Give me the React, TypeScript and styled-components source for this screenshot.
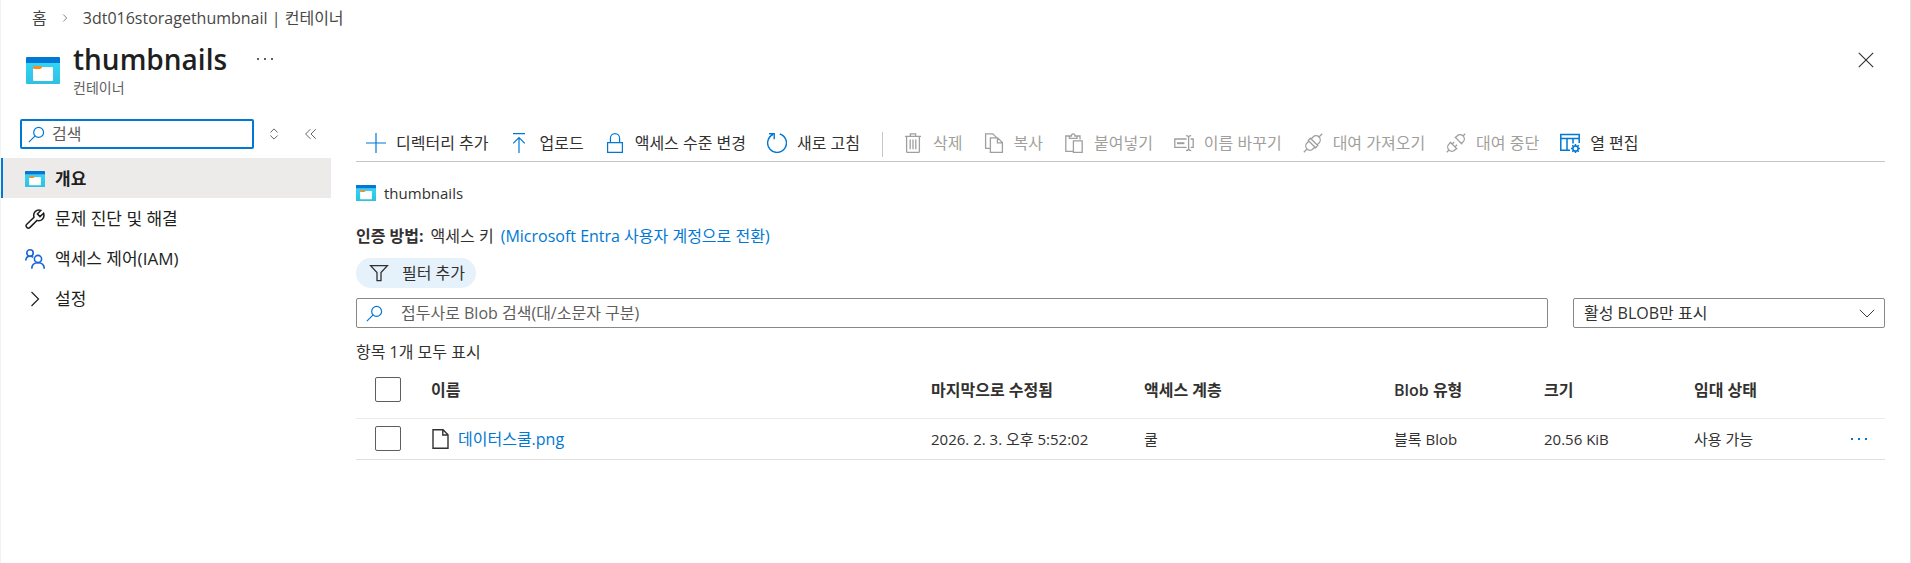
import React from "react";
import styled, { createGlobalStyle, css } from "styled-components";

const blue = "#0078d4";
const ink = "#323130";

const GlobalStyle = createGlobalStyle`
  *, *::before, *::after { box-sizing: border-box; }
  body {
    margin: 0;
    background: #fff;
    color: ${ink};
    font-family: "Open Sans", "Noto Sans CJK KR", sans-serif;
    font-size: 16px;
    line-height: 20px;
  }
  button, input, select { font: inherit; color: inherit; margin: 0; }
  a { color: ${blue}; text-decoration: none; }
  svg { display: block; flex: none; }
`;

const Blade = styled.div`
  min-height: 100vh;
  border-left: 1px solid #f3f2f1;
  border-right: 1px solid #e1dfdd;
`;

const Breadcrumb = styled.nav`
  display: flex;
  align-items: center;
  gap: 13px;
  height: 36px;
  padding-left: 31px;

  a { color: #484644; }
`;

const Header = styled.header`
  display: flex;
  align-items: flex-start;
  height: 74px;
  padding: 5px 36px 0 25px;
`;

const HeaderIcon = styled.div`
  padding-top: 16px;
  margin-right: 13px;
`;

const TitleBlock = styled.div`
  flex: 1;
`;

const TitleLine = styled.div`
  display: flex;
  align-items: center;
  gap: 26px;
`;

const Title = styled.h1`
  margin: 0;
  font-size: 28px;
  font-weight: 600;
  line-height: 36px;
  color: #201f1e;
`;

const Subtitle = styled.p`
  margin: 0;
  font-size: 14px;
  line-height: 22px;
  color: #605e5c;
`;

const IconButton = styled.button`
  display: flex;
  align-items: center;
  justify-content: center;
  width: 24px;
  height: 24px;
  padding: 0;
  border: 0;
  background: none;
  cursor: pointer;
`;

const CloseButton = styled(IconButton)`
  margin: 7px -4px 0 0;
`;

const Columns = styled.div`
  display: flex;
  align-items: flex-start;
`;

const Sidebar = styled.aside`
  width: 330px;
  flex: none;
  padding-top: 9px;
`;

const SidebarTools = styled.div`
  display: flex;
  align-items: center;
  gap: 8px;
  padding-left: 19px;
  margin-bottom: 9px;
`;

const SidebarSearch = styled.label`
  display: flex;
  align-items: center;
  gap: 7px;
  width: 234px;
  height: 30px;
  padding: 0 6px;
  border: 2px solid ${blue};
  border-radius: 2px;
`;

const PlainInput = styled.input`
  flex: 1;
  min-width: 0;
  padding: 0;
  border: 0;
  outline: 0;
  background: none;

  &::placeholder { color: #605e5c; opacity: 1; }
`;

const ToolPair = styled.div`
  display: flex;
  gap: 13px;
`;

const NavLink = styled.a<{ $active?: boolean }>`
  display: flex;
  align-items: center;
  gap: 10px;
  height: 40px;
  padding: 2px 0 0 24px;
  font-size: 17px;
  color: #201f1e;

  ${({ $active }) =>
    $active &&
    css`
      padding-left: 22px;
      border-left: 2px solid ${blue};
      background: #edebe9;
      font-weight: 600;
    `}
`;

const Main = styled.main`
  flex: 1;
  min-width: 0;
  padding: 16px 25px 0 25px;
`;

const Toolbar = styled.div`
  display: flex;
  align-items: center;
  height: 36px;
  padding-bottom: 2px;
  border-bottom: 1px solid #c8c6c4;
`;

const ToolButton = styled.button`
  display: flex;
  align-items: center;
  gap: 10px;
  height: 32px;
  padding: 0 11px 0 10px;
  border: 0;
  background: none;
  white-space: nowrap;
  cursor: pointer;

  svg { color: ${blue}; }

  &:disabled {
    cursor: default;
    color: #a19f9d;
    svg { color: #a19f9d; }
  }
`;

const ToolDivider = styled.span`
  width: 1px;
  height: 25px;
  margin: 4px 10px 0 11px;
  background: #c8c6c4;
`;

const PathRow = styled.div`
  display: flex;
  align-items: center;
  gap: 8px;
  margin-top: 21px;
  font-size: 15px;
`;

const AuthRow = styled.p`
  display: flex;
  gap: 7px;
  margin: 23px 0 12px;
`;

const FilterButton = styled.button`
  display: flex;
  align-items: center;
  gap: 13px;
  height: 30px;
  padding: 0 11px 0 13px;
  border: 0;
  border-radius: 15px;
  background: #e5f1fb;
  cursor: pointer;
`;

const SearchRow = styled.div`
  display: flex;
  gap: 25px;
  margin: 10px 0 14px;
`;

const BlobSearch = styled.label`
  display: flex;
  flex: 1;
  align-items: center;
  gap: 18px;
  height: 30px;
  padding: 0 9px;
  border: 1px solid #8a8886;
  border-radius: 2px;
`;

const SelectBox = styled.div`
  display: grid;
  align-items: center;
  width: 312px;
  height: 30px;
  border: 1px solid #8a8886;
  border-radius: 2px;

  > * { grid-area: 1 / 1; }
  svg { justify-self: end; margin-right: 9px; pointer-events: none; }
`;

const Select = styled.select`
  width: 100%;
  height: 28px;
  padding: 0 30px 0 10px;
  border: 0;
  background: none;
  appearance: none;
`;

const Count = styled.p`
  margin: 0;
`;

const Table = styled.table`
  width: 100%;
  border-collapse: collapse;
  table-layout: fixed;
`;

const HeadCell = styled.th<{ $width?: number }>`
  width: ${({ $width }) => ($width ? `${$width}px` : "auto")};
  height: 56px;
  padding: 0;
  border-bottom: 1px solid #edebe9;
  font-weight: 600;
  text-align: left;
`;

const Cell = styled.td`
  height: 41px;
  padding: 0;
  border-bottom: 1px solid #e1dfdd;
  font-size: 15px;
`;

const Checkbox = styled.input`
  display: block;
  appearance: none;
  width: 26px;
  height: 25px;
  margin: 0 0 0 19px;
  border: 1px solid #605e5c;
  border-radius: 2px;
  background: #fff;
`;

const FileLink = styled.a`
  display: flex;
  align-items: center;
  gap: 7px;
  font-size: 16px;
`;

const MoreButton = styled(IconButton)`
  margin-left: 33px;
`;

const ContainerIcon = ({ width = 20, height = 16 }) => (
  <svg width={width} height={height} viewBox="0 0 34 27" preserveAspectRatio="none" aria-hidden="true">
    <defs>
      <linearGradient id="body" x1="0" y1="0" x2="0" y2="1">
        <stop offset="0" stopColor="#32d4f5" />
        <stop offset="1" stopColor="#2fc0e0" />
      </linearGradient>
    </defs>
    <path d="M0 6h34v20a1 1 0 0 1-1 1H1a1 1 0 0 1-1-1z" fill="url(#body)" />
    <path d="M1 0h32a1 1 0 0 1 1 1v5H0V1a1 1 0 0 1 1-1z" fill="#0078d4" />
    <path d="M8 10h18a1 1 0 0 1 1 1v12a1 1 0 0 1-1 1H8a1 1 0 0 1-1-1V11z" fill="#fff" />
    <path d="M8 9h7a1 1 0 0 1 1 1v1l-2 1H8a1 1 0 0 1-1-1v-1a1 1 0 0 1 1-1z" fill="#f78d1e" />
  </svg>
);

type IconProps = { size?: number; width?: number; color?: string; children: React.ReactNode };

const Icon = ({ size = 20, width = 1.2, color = "currentColor", children }: IconProps) => (
  <svg
    width={size}
    height={size}
    viewBox="0 0 20 20"
    fill="none"
    stroke={color}
    strokeWidth={width}
    aria-hidden="true"
  >
    {children}
  </svg>
);

const SearchIcon = () => (
  <Icon size={17} color={blue} width={1.4}>
    <circle cx="12.5" cy="7.5" r="5.8" />
    <path d="M8.4 11.6 1 19" />
  </Icon>
);

const Dots = ({ color = ink }) => (
  <svg width="20" height="4" viewBox="0 0 20 4" fill={color} aria-hidden="true">
    <rect x="2" y="1" width="2" height="2" />
    <rect x="9" y="1" width="2" height="2" />
    <rect x="16" y="1" width="2" height="2" />
  </svg>
);

const AddIcon = () => <Icon><path d="M10 0v20M0 10h20" /></Icon>;
const UploadIcon = () => <Icon><path d="M4 .6h12M10 20V4.5M4.2 10.3 10 4.5l5.8 5.8" /></Icon>;
const LockIcon = () => (
  <Icon><path d="M2.6 9.6h14.800v9.800H2.600zM5.400 9.600V5.200a4.600 4.600 0 0 1 9.200 0v4.400" /></Icon>
);
const RefreshIcon = () => (
  <Icon width={1.4}><path d="M12.8 1A9.4 9.4 0 1 1 6 1.5M2 .8h5.2v5.400" /></Icon>
);
const TrashIcon = () => (
  <Icon width={1.3}>
    <path d="M2 3.4h16M7.400 3.200V.8h5.200v2.400M3.600 3.600v14.800q0 1 1 1h10.800q1 0 1-1V3.600M7.200 6.400v9.800M10 6.400v9.800M12.800 6.400v9.800" />
  </Icon>
);
const CopyIcon = () => (
  <Icon width={1.3}>
    <path d="M6 15.4H1.6V.8h7.200l3.600 3.600M6.400 4.800h7.200l4.800 4.800v9.800h-12zM13.400 4.800v5h5" />
  </Icon>
);
const PasteIcon = () => (
  <Icon width={1.3}>
    <path d="M9 18.400H1.800V3h3.600M12.800 3H16v3.400M5.400 5.400V3h2q0-2.200 1.800-2.200T11 3h2v2.400zM9.400 7.800h8.800v11.600H9.400z" />
  </Icon>
);
const RenameIcon = () => (
  <Icon width={1.3}>
    <path d="M12.600 14.400H.8V6h11.800M16.600 6h2.600v8.400h-2.600M12 2.600q2.600 0 2.600 2v11q0 2-2.600 2M17.200 2.600q-2.600 0-2.600 2v11q0 2 2.600 2" />
    <path d="M3 10.200h7.400" strokeWidth="2" />
  </Icon>
);
const LeaseIcon = () => (
  <Icon width={1.3}>
    <g transform="rotate(45 10 10)">
      <path d="M10-3v4.500M10 18.500V23M5.800 8.500V5.700a4.200 4.200 0 0 1 8.400 0v2.800M5.800 11.500v2.800a4.200 4.200 0 0 0 8.400 0v-2.800M4.800 8.500h10.400v3H4.800z" />
    </g>
  </Icon>
);
const BreakLeaseIcon = () => (
  <Icon width={1.3}>
    <g transform="rotate(45 10 10)">
      <path d="M10-3v3M10 20v3M4.800 6.500h10.400M5.800 6.500V4.200a4.200 4.200 0 0 1 8.400 0v2.300M4.800 13.500h10.400M5.800 13.500v2.300a4.200 4.200 0 0 0 8.400 0v-2.300M8 10.500v3M12 10.500v3" />
    </g>
  </Icon>
);
const EditColumnsIcon = () => (
  <Icon width={1.5}>
    <path d="M10 17.200H.8V1.600h18.400v8.400M.8 5.600h18.400M7 5.600v11.600M13 5.600v5" />
    <circle cx="15.500" cy="15.500" r="2.600" />
    <path d="M15.500 11v2M15.500 18v2M11 15.500h2M18 15.500h2M12.300 12.300l1.400 1.400M17.300 17.300l1.400 1.400M12.300 18.700l1.400-1.400M17.300 13.700l1.400-1.400" />
  </Icon>
);
const WrenchIcon = () => (
  <Icon width={1.5}>
    <path d="M18.600 4.200 15 7.600 12.400 5l3.400-3.600Q12.600.2 10.200 2.600 8 5 9 8.200L1.800 15.200q-1.600 1.600 0 3.200t3.200 0l7-7q3.200 1 5.400-1.200 2.400-2.600 1.200-6z" />
  </Icon>
);
const PeopleIcon = () => (
  <Icon width={1.6} color="#1565d8">
    <circle cx="5" cy="4" r="3.200" />
    <circle cx="13" cy="10" r="3.600" />
    <path d="M.8 11.600q0-4.400 4.200-4.400 2 0 3.200 1.200M6.800 19.800q0-6 6.200-6t6.200 6" />
  </Icon>
);
const ChevronRight = ({ size = 20 }) => <Icon size={size}><path d="m6.500 3 7 7-7 7" /></Icon>;
const FilterIcon = () => (
  <Icon width={1.3}><path d="M1.600 2.600h16.800L12 9.600V17.600H8V9.600z" /></Icon>
);
const FileIcon = () => (
  <Icon width={1.4} color={ink}><path d="M2 .8h10l5 5v13.400H2zM11.800.8v5.200H17" /></Icon>
);

const tools = [
  { label: "디렉터리 추가", icon: <AddIcon /> },
  { label: "업로드", icon: <UploadIcon /> },
  { label: "액세스 수준 변경", icon: <LockIcon /> },
  { label: "새로 고침", icon: <RefreshIcon />, divider: true },
  { label: "삭제", icon: <TrashIcon />, disabled: true },
  { label: "복사", icon: <CopyIcon />, disabled: true },
  { label: "붙여넣기", icon: <PasteIcon />, disabled: true },
  { label: "이름 바꾸기", icon: <RenameIcon />, disabled: true },
  { label: "대여 가져오기", icon: <LeaseIcon />, disabled: true },
  { label: "대여 중단", icon: <BreakLeaseIcon />, disabled: true },
  { label: "열 편집", icon: <EditColumnsIcon /> },
];

const navItems = [
  { label: "개요", icon: <ContainerIcon />, active: true },
  { label: "문제 진단 및 해결", icon: <WrenchIcon /> },
  { label: "액세스 제어(IAM)", icon: <PeopleIcon /> },
  { label: "설정", icon: <ChevronRight /> },
];

export default function App() {
  return (
    <>
      <GlobalStyle />
      <Blade>
        <Breadcrumb aria-label="Breadcrumb">
          <a href="#home">홈</a>
          <ChevronRight size={10} />
          <a href="#storage">3dt016storagethumbnail | 컨테이너</a>
        </Breadcrumb>

        <Header>
          <HeaderIcon><ContainerIcon width={34} height={27} /></HeaderIcon>
          <TitleBlock>
            <TitleLine>
              <Title>thumbnails</Title>
              <IconButton type="button" aria-label="More"><Dots color="#605e5c" /></IconButton>
            </TitleLine>
            <Subtitle>컨테이너</Subtitle>
          </TitleBlock>
          <CloseButton type="button" aria-label="Close">
            <Icon size={16} width={1.4}><path d="m1 1 18 18M19 1 1 19" /></Icon>
          </CloseButton>
        </Header>

        <Columns>
          <Sidebar>
            <SidebarTools>
              <SidebarSearch>
                <SearchIcon />
                <PlainInput type="text" placeholder="검색" aria-label="검색" />
              </SidebarSearch>
              <ToolPair>
                <IconButton type="button" aria-label="Sort">
                  <Icon size={12} width={1.6} color="#605e5c"><path d="m4 7.500 6-6 6 6M4 12.500l6 6 6-6" /></Icon>
                </IconButton>
                <IconButton type="button" aria-label="Collapse">
                  <Icon size={12} width={1.6} color="#605e5c"><path d="m9 2-8 8 8 8M18 2l-8 8 8 8" /></Icon>
                </IconButton>
              </ToolPair>
            </SidebarTools>
            <nav aria-label="Menu">
              {navItems.map((item) => (
                <NavLink key={item.label} href="#menu" $active={item.active}>
                  {item.icon}
                  {item.label}
                </NavLink>
              ))}
            </nav>
          </Sidebar>

          <Main>
            <Toolbar role="toolbar">
              {tools.map((tool) => (
                <React.Fragment key={tool.label}>
                  <ToolButton type="button" disabled={tool.disabled}>
                    {tool.icon}
                    {tool.label}
                  </ToolButton>
                  {tool.divider && <ToolDivider />}
                </React.Fragment>
              ))}
            </Toolbar>

            <PathRow><ContainerIcon />thumbnails</PathRow>
            <AuthRow>
              <strong>인증 방법:</strong>
              <span>액세스 키</span>
              <a href="#switch">(Microsoft Entra 사용자 계정으로 전환)</a>
            </AuthRow>
            <FilterButton type="button"><FilterIcon />필터 추가</FilterButton>

            <SearchRow>
              <BlobSearch>
                <SearchIcon />
                <PlainInput
                  type="text"
                  placeholder="접두사로 Blob 검색(대/소문자 구분)"
                  aria-label="접두사로 Blob 검색(대/소문자 구분)"
                />
              </BlobSearch>
              <SelectBox>
                <Select aria-label="Blob 표시">
                  <option>활성 BLOB만 표시</option>
                </Select>
                <Icon size={16}><path d="m1 6 9 9 9-9" /></Icon>
              </SelectBox>
            </SearchRow>

            <Count>항목 1개 모두 표시</Count>
            <Table>
              <thead>
                <tr>
                  <HeadCell $width={75}><Checkbox type="checkbox" aria-label="모두 선택" /></HeadCell>
                  <HeadCell>이름</HeadCell>
                  <HeadCell $width={213}>마지막으로 수정됨</HeadCell>
                  <HeadCell $width={250}>액세스 계층</HeadCell>
                  <HeadCell $width={150}>Blob 유형</HeadCell>
                  <HeadCell $width={150}>크기</HeadCell>
                  <HeadCell $width={120}>임대 상태</HeadCell>
                  <HeadCell $width={71} />
                </tr>
              </thead>
              <tbody>
                <tr>
                  <Cell><Checkbox type="checkbox" aria-label="데이터스쿨.png 선택" /></Cell>
                  <Cell><FileLink href="#blob"><FileIcon />데이터스쿨.png</FileLink></Cell>
                  <Cell>2026. 2. 3. 오후 5:52:02</Cell>
                  <Cell>쿨</Cell>
                  <Cell>블록 Blob</Cell>
                  <Cell>20.56 KiB</Cell>
                  <Cell>사용 가능</Cell>
                  <Cell>
                    <MoreButton type="button" aria-label="More"><Dots color={blue} /></MoreButton>
                  </Cell>
                </tr>
              </tbody>
            </Table>
          </Main>
        </Columns>
      </Blade>
    </>
  );
}
